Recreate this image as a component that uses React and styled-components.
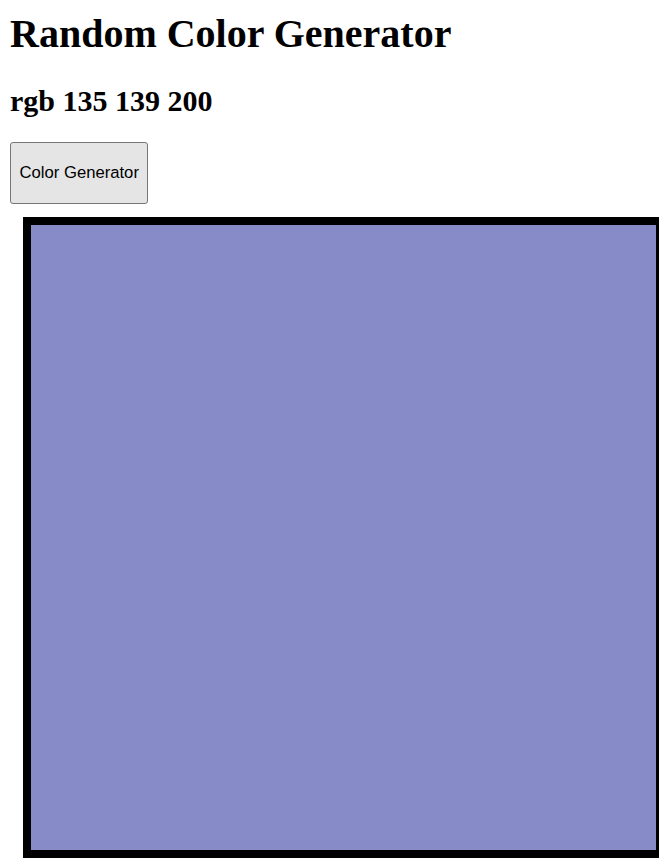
import styled, { createGlobalStyle } from 'styled-components';
import { useState } from 'react';

const GlobalStyle = createGlobalStyle`
body {
  margin: 10px 10px 0 10px;
  font-family: 'Liberation Serif', 'Times New Roman', serif;
  background: #FFFFFF;
  color: #000000;
}
`;

const Wrapper = styled.div`
display: flex;
flex-direction: column;
align-items: flex-start;
`;

const Title = styled.h1`
font-family: 'Liberation Serif', 'Times New Roman', serif;
font-weight: 700;
font-size: 40px;
margin: 0 0 27px 0;
`;

const ColorText = styled.h2`
font-family: 'Liberation Serif', 'Times New Roman', serif;
font-weight: 700;
font-size: 30px;
margin: 0 0 24px 0;
`;

const GenerateButton = styled.button`
font-family: 'Liberation Sans', Arial, sans-serif;
font-size: 16.67px;
color: #000000;
background: #E5E5E5;
border: 1px solid #767676;
border-radius: 3px;
height: 62px;
padding: 0 8.5px;
margin: 0;
cursor: pointer;
`;

const ColorBox = styled.div`
flex-shrink: 0;
box-sizing: content-box;
width: 625px;
height: 625px;
border: 8px solid #000000;
margin: 13px 0 0 13px;
background: ${(props) => props.$color};
`;

function App() {
  const [rgb, setRgb] = useState([135, 139, 200]);

  const generate = () => {
    setRgb([0, 0, 0].map(() => Math.floor(Math.random() * 256)));
  };

  return (
    <Wrapper>
      <GlobalStyle />
      <Title>Random Color Generator</Title>
      <ColorText>rgb {rgb[0]} {rgb[1]} {rgb[2]}</ColorText>
      <GenerateButton onClick={generate}>Color Generator</GenerateButton>
      <ColorBox $color={`rgb(${rgb[0]}, ${rgb[1]}, ${rgb[2]})`} />
    </Wrapper>
  );
}

export default App;
